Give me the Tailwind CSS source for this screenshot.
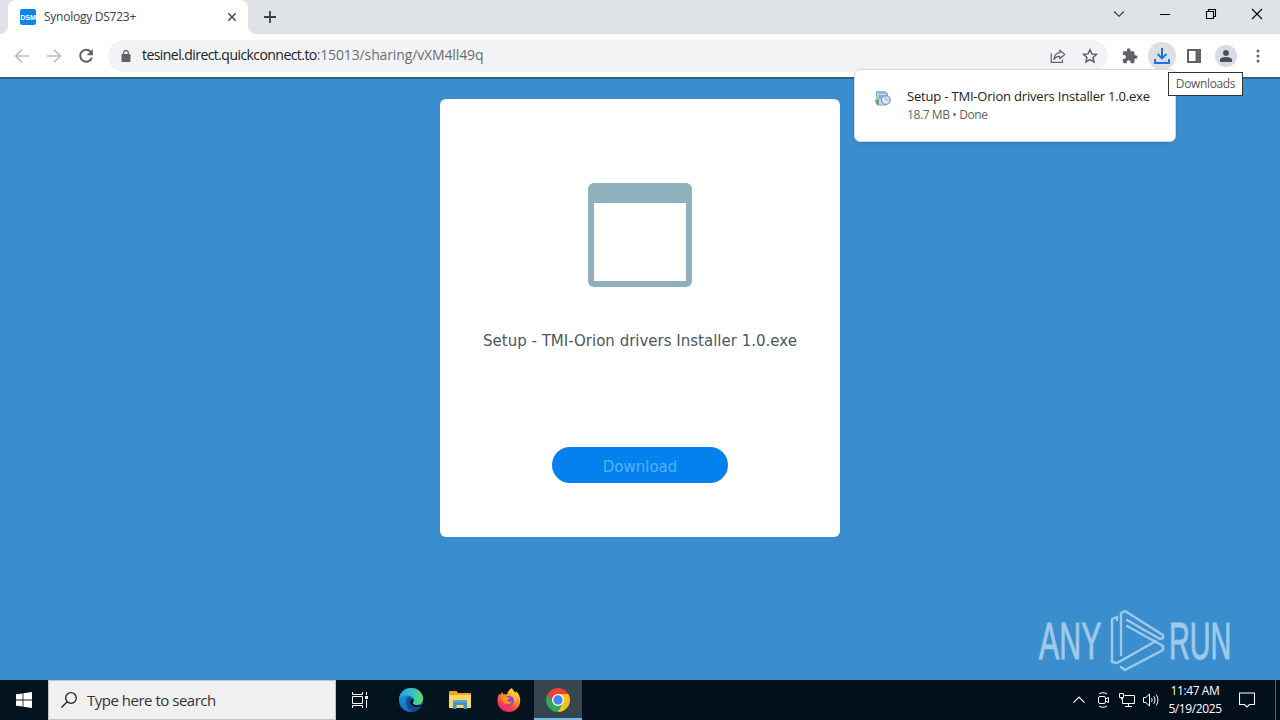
<!doctype html>
<html lang="en">
  <head>
    <meta charset="UTF-8" />
    <meta name="viewport" content="width=device-width, initial-scale=1.0" />
    <title>Synology DS723+</title>
    <script src="https://cdn.jsdelivr.net/npm/@tailwindcss/browser@4"></script>
  </head>

  <body class="relative flex flex-col w-[1280px] h-[720px] overflow-hidden bg-white font-['Open_Sans','Noto_Sans',sans-serif]">
    <!-- Tab strip -->
    <div class="flex h-[34px] shrink-0 bg-[#dee1e6]">
      <div class="w-2 bg-white"><div class="h-full bg-[#dee1e6] rounded-br-lg"></div></div>
      <div class="bg-[#dee1e6]">
        <div class="flex items-center w-[240px] h-full pl-3 pr-[11px] rounded-t-lg bg-white">
          <div class="flex items-center justify-center w-4 h-4 rounded-[2px] bg-[#0a84ee] text-white text-[7px] font-bold leading-none font-['Liberation_Sans',sans-serif]">DSM</div>
          <span class="ml-2 grow text-[12px] leading-4 tracking-[-0.25px] text-[#3c4043] whitespace-nowrap">Synology DS723+</span>
          <svg class="w-[10px] h-[10px]" viewBox="0 0 10 10" stroke="#45494d" stroke-width="1.5"><path d="M1.3 1.3l7.4 7.4M8.7 1.3L1.3 8.7" /></svg>
        </div>
      </div>
      <div class="w-2 bg-white"><div class="h-full bg-[#dee1e6] rounded-bl-lg"></div></div>
      <svg class="ml-2 mt-[11px] w-3 h-3" viewBox="0 0 12 12" stroke="#3c4043" stroke-width="1.8"><path d="M6 0v12M0 6h12" /></svg>
      <div class="flex ml-auto h-7 items-center text-black">
        <div class="flex w-[46px] justify-center"><svg class="w-3 h-3" viewBox="0 0 12 12" fill="none" stroke="#333" stroke-width="1.1"><path d="M1.200 3.500L6 8.300l4.800-4.800" /></svg></div>
        <div class="flex w-[46px] justify-center"><svg class="w-3 h-3" viewBox="0 0 12 12" stroke="#000"><path d="M1 6.500h10" /></svg></div>
        <div class="flex w-[46px] justify-center"><svg class="w-3 h-3" viewBox="0 0 12 12" fill="none" stroke="#000" stroke-width="1.1"><path d="M1.500 3.500h7v7h-7zM3.500 3.500v-2h7v7h-2" /></svg></div>
        <div class="flex w-[46px] justify-center"><svg class="w-3 h-3" viewBox="0 0 12 12" stroke="#000" stroke-width="1.1"><path d="M1 1l10 10M11 1L1 11" /></svg></div>
      </div>
    </div>

    <!-- Toolbar -->
    <div class="flex items-center h-[43px] shrink-0 bg-white">
      <svg class="ml-[14px] w-4 h-4" viewBox="0 0 16 16" fill="none" stroke="#babcbe" stroke-width="1.7"><path d="M15 8H2M8.200 1.500L1.700 8l6.500 6.500" /></svg>
      <svg class="ml-4 w-4 h-4" viewBox="0 0 16 16" fill="none" stroke="#babcbe" stroke-width="1.7"><path d="M1 8h13M7.800 1.500L14.300 8l-6.500 6.500" /></svg>
      <svg class="ml-4 w-4 h-4" viewBox="0 0 16 16"><path d="M12.800 3.800A6 6 0 1 0 13.900 9.600" fill="none" stroke="#5f6368" stroke-width="2" /><path d="M14.900 1v6.300H8.600z" fill="#5f6368" /></svg>
      <div class="flex items-center w-[1000px] h-8 ml-[14px] pl-[13px] pr-[10px] rounded-full bg-[#f1f3f4]">
        <svg class="w-[10px] h-3" viewBox="0 0 10 12"><rect x="0.500" y="4" width="9" height="8" rx="1" fill="#5f6368" /><path d="M2.600 5V3a2.400 2.400 0 0 1 4.800 0v2" fill="none" stroke="#5f6368" stroke-width="1.300" /></svg>
        <span class="ml-[11px] mb-px text-[14px] leading-5 tracking-[-0.13px] text-[#6a6e73] whitespace-nowrap"><span class="tracking-[-0.56px] text-[#202124]">tesinel.direct.quickconnect.to</span>:15013/sharing/vXM4ll49q</span>
        <svg class="ml-auto w-4 h-4" viewBox="0 0 16 16" fill="none" stroke="#5f6368" stroke-width="1.2"><path d="M1.200 5.200v9.200h11.300v-3" /><path d="M9.800 2.200l4.900 4.300-4.900 4.300V8.400C7 8.300 5.300 9.300 4 11.400c.3-3.700 2.300-6.300 5.800-6.700z" stroke-linejoin="round" /></svg>
        <svg class="ml-4 w-4 h-4" viewBox="0 0 16 16" fill="none" stroke="#5f6368" stroke-width="1.5"><path d="M8 1.700l1.900 4.200 4.600.5-3.400 3.100.9 4.500L8 11.700 4 14l.9-4.500L1.500 6.400l4.600-.5z" /></svg>
      </div>
      <svg class="ml-[13px] w-[18px] h-[18px]" viewBox="0 0 24 24" fill="#5f6368"><path d="M19.500 11H18V7.500c0-1.100-.9-2-2-2h-3.500V4c0-1.300-1-2.300-2.300-2.300S8 2.700 8 4v1.500H4.500c-1.100 0-1.990.9-1.990 2v3.300H4c1.490 0 2.500 1.210 2.500 2.500S5.500 15.800 4 15.800H2.500V19.500c0 1.100.9 2 2 2h3.300V20c0-1.490 1.210-2.500 2.500-2.500s2.500 1 2.500 2.500v1.500H16c1.100 0 2-.9 2-2V15.800h1.500c1.380 0 2.400-1.100 2.400-2.400S20.880 11 19.500 11z" /></svg>
      <div class="flex items-center justify-center w-7 h-7 ml-[9px] rounded-full bg-[#dddfe2]">
        <svg class="w-4 h-4" viewBox="0 0 16 16" fill="none" stroke="#1a73e8" stroke-width="2"><path d="M8 0v10M3.600 6L8 10.400 12.400 6M1 11v4h14v-4" /></svg>
      </div>
      <svg class="ml-[11px] w-[14px] h-[14px]" viewBox="0 0 14 14"><path d="M1 1h12v12H1z" fill="none" stroke="#5f6368" stroke-width="2" /><path d="M8.500 1H13v12H8.500z" fill="#5f6368" /></svg>
      <div class="flex items-center justify-center w-[22px] h-[22px] ml-[14px] rounded-full bg-[#d9dbe4]">
        <svg class="w-3 h-3" viewBox="0 0 12 12" fill="#4a4e59"><circle cx="6" cy="2.900" r="2.900" /><path d="M0 12V9.800C0 7.800 3.500 7 6 7s6 .8 6 2.800V12z" /></svg>
      </div>
      <svg class="ml-[19px] w-1 h-[14px]" viewBox="0 0 4 14" fill="#5f6368"><circle cx="2" cy="2" r="1.500" /><circle cx="2" cy="7" r="1.500" /><circle cx="2" cy="12" r="1.500" /></svg>
    </div>

    <!-- Sharing page -->
    <div class="relative grow bg-[#3a8ece] border-t-2 border-[#345f82] pt-5">
      <div class="flex flex-col items-center w-[400px] h-[438px] mx-auto pt-[84px] rounded-md bg-white font-['DejaVu_Sans',sans-serif]">
        <div class="w-[104px] h-[104px] rounded-md bg-[#8fb0bc] px-[6px] pt-5"><div class="h-[78px] bg-white"></div></div>
        <div class="mt-11 text-[15px] leading-5 text-[#4d5660] whitespace-nowrap">Setup - TMI-Orion drivers Installer 1.0.exe</div>
        <button class="w-[176px] h-9 mt-24 rounded-full bg-[#0580ef] pt-[3px] text-[15px] leading-5 text-[#53b3f7]">Download</button>
      </div>

      <!-- Watermark -->
      <svg class="absolute right-[44px] bottom-[6px] w-[200px] h-[66px]" viewBox="0 0 200 66">
        <g fill="#9fc9e9" stroke="#9fc9e9" stroke-width="1" font-family="Liberation Sans, sans-serif">
          <text transform="translate(3 51) scale(.6 1)" font-size="51" textLength="104" lengthAdjust="spacingAndGlyphs">ANY</text>
          <text transform="translate(133 51) scale(.6 1)" font-size="51" textLength="104" lengthAdjust="spacingAndGlyphs">RUN</text>
        </g>
        <g fill="none" stroke="#9fc9e9" stroke-width="2.4" stroke-linejoin="round" stroke-linecap="round">
          <path d="M81 12V9l-5 2v43l5 1 39-22" />
          <path d="M85 47V5l4-2 38 24v3l-3 1-33-19" />
          <path d="M91 18l36 20v4L89 62l-4-3" />
        </g>
      </svg>
    </div>

    <!-- Taskbar -->
    <div class="flex h-10 shrink-0 bg-[#04141e]">
      <div class="flex w-12 items-center justify-center">
        <svg class="w-4 h-4" viewBox="0 0 16 16" fill="#fff"><path d="M0 2.300l6.600-.9v6.200H0zM7.400 1.300L16 0v7.600H7.400zM0 8.400h6.600v6.200L0 13.700zM7.400 8.400H16V16l-8.600-1.200z" /></svg>
      </div>
      <div class="flex items-center w-[288px] h-full pl-3 border border-[#bfc3c5] bg-[#f0f0f0]">
        <svg class="w-4 h-4" viewBox="0 0 16 16" fill="none" stroke="#222" stroke-width="1.3"><circle cx="10" cy="6" r="5.300" /><path d="M6.200 9.800L.4 15.600" /></svg>
        <span class="ml-[10px] text-[15px] leading-5 tracking-[-0.49px] text-[#333] whitespace-nowrap">Type here to search</span>
      </div>
      <div class="flex w-12 items-center justify-center">
        <svg class="w-4 h-4" viewBox="0 0 16 16" fill="none" stroke="#fff"><path d="M.5 0v2.500h10V0M.5 16v-2.500h10V16M.5 4.500h10v7H.5zM14.500 0v3M14.500 8v8" /><path d="M13 4h3v3h-3z" fill="#fff" stroke="none" /></svg>
      </div>
      <div class="flex w-[54px] items-center justify-center">
        <svg class="w-6 h-6" viewBox="0 0 24 24">
          <defs>
            <linearGradient id="edgeTop" x1="0" x2="1"><stop stop-color="#249de0" /><stop offset=".55" stop-color="#32c4c4" /><stop offset="1" stop-color="#63dd62" /></linearGradient>
            <linearGradient id="edgeLow" x1="0" x2="1" y2="1"><stop stop-color="#1d9de6" /><stop offset="1" stop-color="#0b57a8" /></linearGradient>
          </defs>
          <circle cx="12" cy="12" r="12" fill="url(#edgeLow)" />
          <path d="M0 11C.6 4.800 5.600 0 12 0c7 0 12 5 12 10.500 0 4-3 6.500-6.500 6.500-2.500 0-4.300-1-3.800-2 1.800-2.500 1-6.800-4-7.300C5.600 7.200 1.500 8.500 0 11z" fill="url(#edgeTop)" />
          <path d="M9.500 9C5.500 12 6.500 20 13 23.800c4.200-.2 7.500-2.300 9.500-5.600-6 2.300-11.500 0-12-4.200-.2-2 .6-3.500 2-4.300-.8-.8-2-1.100-3-.7z" fill="#104a8e" />
          <path d="M13.700 15c1-1.200 1.300-2.800.6-4.300-1.300-.5-3.300 1-3.300 3.300 0 4 6 6.300 11.300 4.200.7-.3 1.400-1.500 1.200-2-3.500 2-9.300 1.200-9.800-1.200z" fill="#04141e" />
        </svg>
      </div>
      <div class="flex w-11 items-center justify-center">
        <svg class="w-[22px] h-[18px]" viewBox="0 0 22 18"><path d="M0 1.500C0 .7.500 0 1.300 0h6l2 2H21c.6 0 1 .4 1 1v14H0z" fill="#e9a825" /><path d="M0 4h22v13H0z" fill="#fcd667" /><path d="M4 18V10.500c0-.8.600-1.300 1.300-1.300h11.400c.7 0 1.300.5 1.300 1.300V18h-3.500v-4h-7v4z" fill="#3c92cd" /><path d="M4 10.800h14" stroke="#66b5e2" /></svg>
      </div>
      <div class="flex w-[52px] items-center justify-center pl-0.5">
        <svg class="w-6 h-6" viewBox="0 0 24 24">
          <defs><linearGradient id="fox" x1=".8" y1="0" x2=".3" y2="1"><stop stop-color="#fff04a" /><stop offset=".4" stop-color="#ff9a28" /><stop offset=".75" stop-color="#ff3d4a" /><stop offset="1" stop-color="#e42184" /></linearGradient></defs>
          <path d="M15 0c.5 2 2.500 3.400 4 5 .3-.7.1-1.400 0-2 3 2.500 4.500 6.500 4.200 10.500C22.800 19.500 18 24 12 24S.8 19.500.5 13.500C.4 10 1 7.500 2.500 5.500L3 7.500 5 4l1.500 2.500c1.300-.4 2.500-.3 3.500 0C10.500 3.500 13 1 15 0z" fill="url(#fox)" />
          <circle cx="12" cy="12.700" r="4.800" fill="#8a43d6" />
          <path d="M5 9c2.500-1 4-.5 5.200.5h2.800c0 1.300-2 2-3 2.500.5 1.500 3 2.500 5 1-.5 3-4.500 4-7 2.500S4.500 11 5 9z" fill="#ff9228" />
          <path d="M14 7c3.300 1 4.200 4 3.500 7 1.500-1 2-3 1.500-5-1-2-3-3.500-4.500-5.500-1 1-.9 2.500-.5 3.500z" fill="#ffca35" />
        </svg>
      </div>
      <div class="flex w-12 items-center justify-center border-b-2 border-[#76b9ed] bg-[#36454e] pt-0.5">
        <svg class="w-6 h-6" viewBox="0 0 24 24"><path d="M12 12V6h10.390A12 12 0 0 1 12 24z" fill="#fbc116" /><path d="M1.610 6L6.800 15 12 12V6h10.390A12 12 0 0 0 1.610 6z" fill="#ea4335" /><path d="M1.610 6A12 12 0 0 0 12 24l5.200-9L12 12 6.800 15z" fill="#34a853" /><circle cx="12" cy="12" r="6" fill="#fff" /><circle cx="12" cy="12" r="4.700" fill="#4285f4" /></svg>
      </div>

      <!-- Tray -->
      <div class="flex grow items-center justify-end bg-[#030f1b] text-white">
        <svg class="w-3 h-3" viewBox="0 0 12 12" fill="none" stroke="#fff" stroke-width="1.2"><path d="M.5 8.700L6 3.200l5.500 5.500" /></svg>
        <svg class="ml-3 w-3 h-4" viewBox="0 0 12 16" fill="none" stroke="#fff"><rect x="1.500" y="4.500" width="7" height="7" rx="1.500" /><path d="M8.500 7l3-1.500v5l-3-1.500M2 2c2-1.700 6-1.700 8 0M2 14c2 1.700 6 1.700 8 0" /></svg>
        <svg class="ml-[10px] w-4 h-4" viewBox="0 0 16 16" fill="none" stroke="#fff"><path d="M5.500 3.500h10v8H3.500V6M9.500 11.500v3M6 14.500h7M.5 1.500h4v4h-4zM2.500 5.500v2" /></svg>
        <svg class="ml-2 w-4 h-4" viewBox="0 0 16 16" fill="none" stroke="#fff"><path d="M.5 5.500h2.300L6.500 2v12l-3.700-3.500H.5zM8.500 6c.8 1.200.8 2.800 0 4M10.700 4.200c1.700 2.300 1.700 5.300 0 7.600M13 2.500c2.500 3.200 2.500 7.800 0 11" /></svg>
        <div class="w-[72px] text-center text-[12px] leading-[18px] tracking-[-0.4px] whitespace-nowrap"><div>11:47 AM</div><div>5/19/2025</div></div>
        <svg class="ml-2 w-4 h-4" viewBox="0 0 16 16" fill="none" stroke="#fff" stroke-width="1.1"><path d="M.5 1h15v11.500h-5L8 15l-2.500-2.500h-5z" /></svg>
        <div class="ml-5 w-[5px] h-full border-l border-[#59636c]"></div>
      </div>
    </div>

    <!-- Download bubble -->
    <div class="absolute left-[854px] top-[69px] flex w-[322px] h-[73px] pl-5 pt-[17px] rounded-md border border-[#d4d9dd] bg-white shadow-sm">
      <svg class="mt-[3px] w-4 h-4" viewBox="0 0 16 16"><path d="M1 1h10v3H1z" fill="#9bbadd" /><path d="M1.500 3h11l-1 12H2.500z" fill="#c3dced" stroke="#88a8c4" /><path d="M0 10l4-1v6l-3-1z" fill="#69a87e" /><path d="M3.500 6h5M3.500 8h3" stroke="#4d83b8" /><circle cx="10.800" cy="10" r="4.400" fill="#d9e8f7" stroke="#8493bd" stroke-width="1.3" /><path d="M10.800 6v4h3" stroke="#8fabd4" fill="none" /></svg>
      <div class="ml-4 whitespace-nowrap">
        <div class="text-[13px] leading-[18px] tracking-[-0.19px] text-[#202124]">Setup - TMI-Orion drivers Installer 1.0.exe</div>
        <div class="mt-px text-[12px] leading-[18px] tracking-[-0.4px] text-[#5f6368]">18.7 MB • Done</div>
      </div>
    </div>

    <!-- Tooltip -->
    <div class="absolute left-[1168px] top-[72px] flex w-[75px] h-6 items-center justify-center border border-[#333] bg-white text-[12px] tracking-[-0.35px] text-[#575757]">Downloads</div>
  </body>
</html>
